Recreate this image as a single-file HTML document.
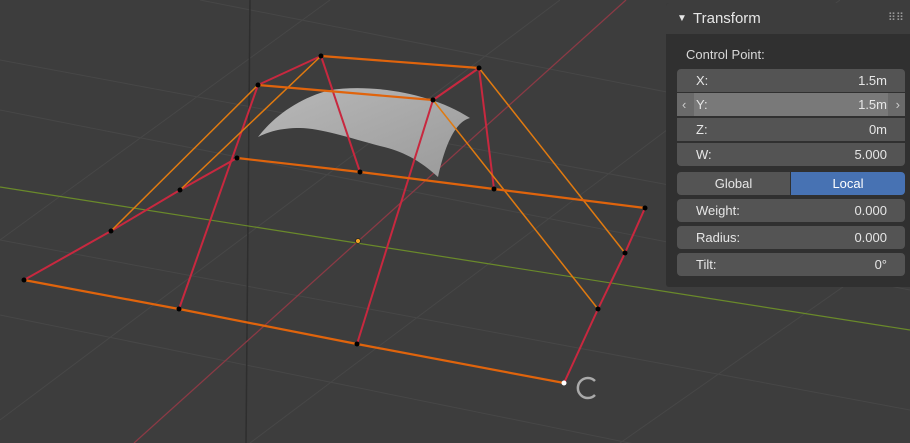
<!DOCTYPE html>
<html><head><style>
html,body{margin:0;width:910px;height:443px;overflow:hidden}
body{background:#3d3d3d;font-family:"Liberation Sans",sans-serif;position:relative}
svg{position:absolute;left:0;top:0}
.p{position:absolute;left:666px;top:3px;width:244px;height:284px;background:#303030;border-radius:3px 0 0 3px}
.hd{position:absolute;left:0;top:0;width:244px;height:31px;background:#3d3d3d;border-radius:3px 0 0 0;color:#e6e6e6;font-size:15px;line-height:31px}
.f{position:absolute;left:11px;width:228px;background:#545454;color:#e6e6e6;font-size:13px;height:23px;line-height:23px;overflow:hidden}
.f .l{position:absolute;left:19px}.f .v{position:absolute;right:18px}
</style></head><body>
<svg width="910" height="443">
<g stroke="#474747" stroke-width="1" fill="none">
<line x1="0" y1="60" x2="910" y2="230"/><line x1="0" y1="110" x2="910" y2="290"/>
<line x1="0" y1="240" x2="910" y2="410"/><line x1="0" y1="315" x2="910" y2="500"/>
<line x1="200" y1="0" x2="910" y2="140"/>
<line x1="0" y1="240" x2="330" y2="0"/><line x1="0" y1="420" x2="560" y2="0"/>
<line x1="250" y1="443" x2="840" y2="0"/><line x1="620" y1="443" x2="910" y2="240"/>
</g>
<line x1="250" y1="0" x2="246" y2="443" stroke="#2e2e2e" stroke-width="1.5"/>
<line x1="0" y1="187" x2="910" y2="330" stroke="#6a8a2a" stroke-width="1.2"/>
<line x1="134" y1="443" x2="626" y2="0" stroke="#8a3a45" stroke-width="1.3"/>
<defs><linearGradient id="g" x1="0" y1="0" x2="1" y2="1"><stop offset="0" stop-color="#b8b8b8"/><stop offset="1" stop-color="#9a9a9a"/></linearGradient></defs>
<path d="M258,137 C275,115 300,98 330,90 C370,84 430,92 470,118 C455,122 445,145 438,177 C420,160 400,150 380,146 C350,138 320,128 300,128 C280,128 268,132 258,137Z" fill="url(#g)"/>
<g stroke="#c8283f" stroke-width="2" fill="none">
<polyline points="24,280 111,231 180,190 237,158"/>
<line x1="179" y1="309" x2="258" y2="85"/>
<line x1="357" y1="344" x2="433" y2="100"/>
<polyline points="564,383 598,309 625,253 645,208"/>
<line x1="258" y1="85" x2="321" y2="56"/><line x1="433" y1="100" x2="479" y2="68"/>
<line x1="321" y1="56" x2="360" y2="172"/><line x1="479" y1="68" x2="494" y2="189"/>
</g>
<g stroke="#e07a10" stroke-width="1.5" fill="none">
<line x1="111" y1="231" x2="258" y2="85"/><line x1="180" y1="190" x2="321" y2="56"/>
<line x1="433" y1="100" x2="598" y2="309"/><line x1="479" y1="68" x2="625" y2="253"/>
</g>
<g stroke="#e0640c" stroke-width="2.2" fill="none">
<polyline points="24,280 179,309 357,344 564,383"/>
<polyline points="237,158 360,172 494,189 645,208"/>
<line x1="321" y1="56" x2="479" y2="68"/><line x1="258" y1="85" x2="433" y2="100"/>
</g>
<g fill="#000">
<circle cx="321" cy="56" r="2.5"/><circle cx="479" cy="68" r="2.5"/><circle cx="433" cy="100" r="2.5"/><circle cx="258" cy="85" r="2.5"/>
<circle cx="237" cy="158" r="2.5"/><circle cx="360" cy="172" r="2.5"/><circle cx="494" cy="189" r="2.5"/><circle cx="645" cy="208" r="2.5"/>
<circle cx="180" cy="190" r="2.5"/><circle cx="111" cy="231" r="2.5"/><circle cx="24" cy="280" r="2.5"/><circle cx="179" cy="309" r="2.5"/>
<circle cx="357" cy="344" r="2.5"/><circle cx="598" cy="309" r="2.5"/><circle cx="625" cy="253" r="2.5"/>
</g>
<circle cx="564" cy="383" r="2.5" fill="#fff"/>
<circle cx="358" cy="241" r="2.5" fill="#f0a020" stroke="#222" stroke-width=".8"/>
<path d="M595,381 A10,10 0 1 0 595,395" stroke="#aaa" stroke-width="2.5" fill="none"/>
</svg>
<div class="p">
<div class="hd"><span style="position:absolute;left:11px;font-size:10px">▼</span><span style="position:absolute;left:27px">Transform</span><span style="position:absolute;right:6px;top:0;font-size:11px;color:#999">⠿⠿</span></div>
<div style="position:absolute;left:20px;top:44px;color:#d8d8d8;font-size:13px">Control Point:</div>
<div class="f" style="top:66px;border-radius:4px 4px 0 0"><span class="l">X:</span><span class="v">1.5m</span></div>
<div class="f" style="top:90px;background:#6a6a6a"><div style="position:absolute;left:17px;width:194px;height:23px;background:#797979"></div><span style="position:absolute;left:5px;color:#ccc">‹</span><span class="l">Y:</span><span class="v">1.5m</span><span style="position:absolute;right:5px;color:#ccc">›</span></div>
<div class="f" style="top:115px"><span class="l">Z:</span><span class="v">0m</span></div>
<div class="f" style="top:140px;border-radius:0 0 4px 4px"><span class="l">W:</span><span class="v">5.000</span></div>
<div class="f" style="top:169px;width:113px;border-radius:4px 0 0 4px;text-align:center">Global</div>
<div class="f" style="top:169px;left:125px;width:114px;background:#4772b3;border-radius:0 4px 4px 0;text-align:center;color:#fff">Local</div>
<div class="f" style="top:196px;border-radius:4px"><span class="l">Weight:</span><span class="v">0.000</span></div>
<div class="f" style="top:223px;border-radius:4px"><span class="l">Radius:</span><span class="v">0.000</span></div>
<div class="f" style="top:250px;border-radius:4px"><span class="l">Tilt:</span><span class="v">0°</span></div>
</div>
</body></html>
